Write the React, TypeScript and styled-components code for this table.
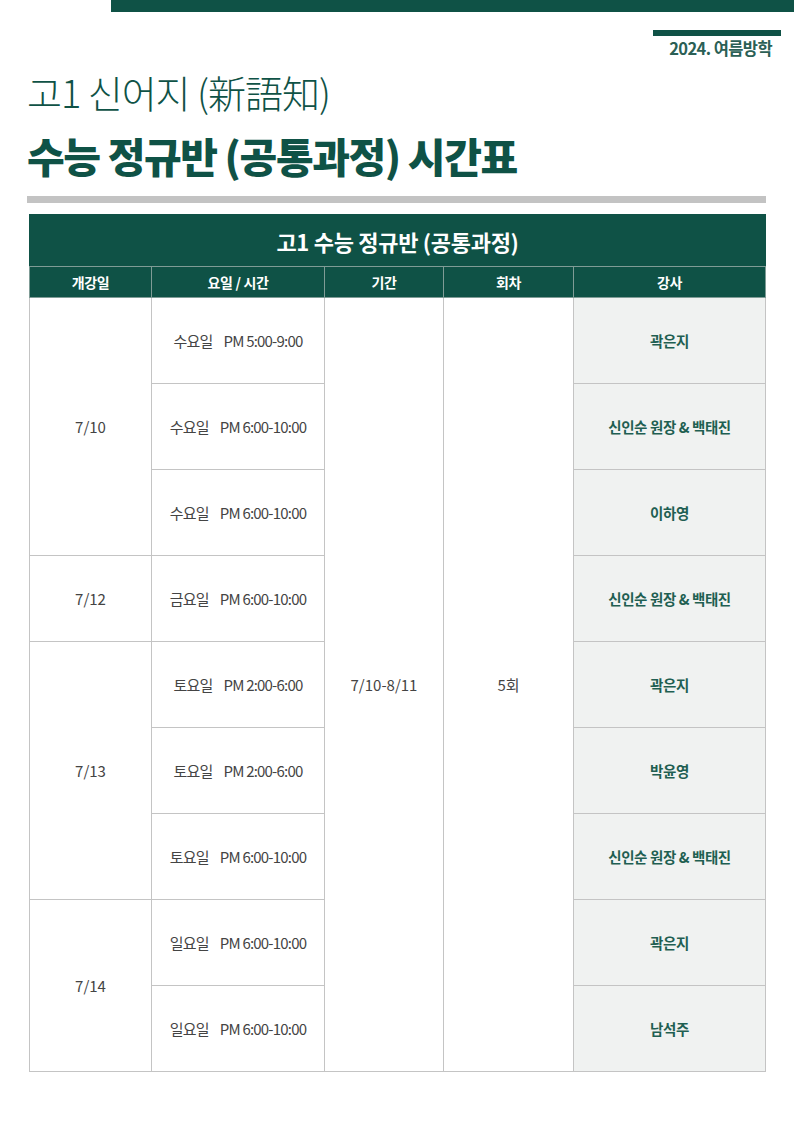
import React from "react";
import styled, { createGlobalStyle } from "styled-components";

const GREEN = "#0f5246";
const LINE = "#c4c4c4";

const GlobalStyle = createGlobalStyle`
  html, body {
    margin: 0;
    padding: 0;
    background: #ffffff;
  }
  body {
    font-family: "Noto Sans CJK KR", "Noto Sans", sans-serif;
    color: #333;
  }
`;

const Page = styled.div`
  width: 794px;
  height: 1123px;
  background: #fff;
  overflow: hidden;
`;

const TopBar = styled.div`
  margin-left: 111px;
  height: 12px;
  background: ${GREEN};
`;

const TermBox = styled.div`
  display: flex;
  flex-direction: column;
  align-items: flex-end;
  padding: 18px 13px 0 0;
`;

const TermLine = styled.div`
  width: 128px;
  height: 6px;
  background: ${GREEN};
`;

const TermText = styled.div`
  margin-top: 1px;
  margin-right: 9px;
  font-size: 16.5px;
  font-weight: 700;
  letter-spacing: -0.6px;
  color: #2b5f55;
  line-height: 22px;
`;

const TitleBlock = styled.div`
  padding: 8px 0 0 27px;
`;

const SubTitle = styled.h2`
  margin: 0;
  font-size: 38px;
  font-weight: 300;
  letter-spacing: -1px;
  color: ${GREEN};
  line-height: 50px;
`;

const MainTitle = styled.h1`
  margin: 10px 0 0;
  font-size: 41px;
  font-weight: 900;
  letter-spacing: -1.4px;
  color: ${GREEN};
  line-height: 56px;
`;

const Divider = styled.div`
  margin: 13px 28px 0 27px;
  height: 7px;
  background: #c3c3c3;
`;

const TableWrap = styled.div`
  padding: 11px 29px 0 29px;
`;

const Table = styled.table`
  width: 736px;
  border-collapse: collapse;
  table-layout: fixed;
`;

const CaptionCell = styled.th`
  height: 51px;
  padding: 0;
  background: ${GREEN};
  color: #fff;
  font-size: 22px;
  font-weight: 700;
  letter-spacing: -0.3px;
  border: 1px solid ${GREEN};
  border-bottom: 1px solid #7f9c96;
`;

const HeadCell = styled.th`
  height: 30px;
  padding: 0;
  background: ${GREEN};
  color: #fff;
  font-size: 14px;
  font-weight: 700;
  letter-spacing: -0.3px;
  border: 1px solid #7f9c96;
  border-top: none;
`;

const Cell = styled.td<{ $tone?: "date" | "time" | "teacher" }>`
  height: 85px;
  padding: 0;
  text-align: center;
  border: 1px solid ${LINE};
  background: ${(p) => (p.$tone === "teacher" ? "#f0f2f1" : "#fff")};
  color: ${(p) => (p.$tone === "teacher" ? "#1f5f52" : "#444")};
  font-size: ${(p) => (p.$tone === "teacher" ? "14.5px" : "15px")};
  font-weight: ${(p) => (p.$tone === "teacher" ? 700 : 400)};
  letter-spacing: ${(p) => (p.$tone === "time" ? "-0.8px" : p.$tone === "teacher" ? "-0.4px" : "0")};
`;

const Gap = styled.span`
  display: inline-block;
  width: 11px;
`;

type Slot = { day: string; time: string; teacher: string };
type Group = { date: string; slots: Slot[] };

const groups: Group[] = [
  {
    date: "7/10",
    slots: [
      { day: "수요일", time: "PM 5:00-9:00", teacher: "곽은지" },
      { day: "수요일", time: "PM 6:00-10:00", teacher: "신인순 원장 & 백태진" },
      { day: "수요일", time: "PM 6:00-10:00", teacher: "이하영" },
    ],
  },
  {
    date: "7/12",
    slots: [{ day: "금요일", time: "PM 6:00-10:00", teacher: "신인순 원장 & 백태진" }],
  },
  {
    date: "7/13",
    slots: [
      { day: "토요일", time: "PM 2:00-6:00", teacher: "곽은지" },
      { day: "토요일", time: "PM 2:00-6:00", teacher: "박윤영" },
      { day: "토요일", time: "PM 6:00-10:00", teacher: "신인순 원장 & 백태진" },
    ],
  },
  {
    date: "7/14",
    slots: [
      { day: "일요일", time: "PM 6:00-10:00", teacher: "곽은지" },
      { day: "일요일", time: "PM 6:00-10:00", teacher: "남석주" },
    ],
  },
];

const totalRows = groups.reduce((n, g) => n + g.slots.length, 0);

export default function App() {
  let rowIndex = 0;
  return (
    <Page>
      <GlobalStyle />
      <TopBar />
      <TermBox>
        <TermLine />
        <TermText>2024. 여름방학</TermText>
      </TermBox>
      <TitleBlock>
        <SubTitle>고1 신어지 (新語知)</SubTitle>
        <MainTitle>수능 정규반 (공통과정) 시간표</MainTitle>
      </TitleBlock>
      <Divider />
      <TableWrap>
        <Table>
          <colgroup>
            <col style={{ width: 122 }} />
            <col style={{ width: 173 }} />
            <col style={{ width: 119 }} />
            <col style={{ width: 130 }} />
            <col style={{ width: 192 }} />
          </colgroup>
          <thead>
            <tr>
              <CaptionCell colSpan={5}>고1 수능 정규반 (공통과정)</CaptionCell>
            </tr>
            <tr>
              <HeadCell>개강일</HeadCell>
              <HeadCell>요일 / 시간</HeadCell>
              <HeadCell>기간</HeadCell>
              <HeadCell>회차</HeadCell>
              <HeadCell>강사</HeadCell>
            </tr>
          </thead>
          <tbody>
            {groups.map((g) =>
              g.slots.map((s, i) => {
                const first = rowIndex === 0;
                rowIndex += 1;
                return (
                  <tr key={`${g.date}-${i}`}>
                    {i === 0 && (
                      <Cell $tone="date" rowSpan={g.slots.length}>
                        {g.date}
                      </Cell>
                    )}
                    <Cell $tone="time">
                      {s.day}
                      <Gap />
                      {s.time}
                    </Cell>
                    {first && (
                      <>
                        <Cell $tone="date" rowSpan={totalRows}>
                          7/10-8/11
                        </Cell>
                        <Cell $tone="date" rowSpan={totalRows}>
                          5회
                        </Cell>
                      </>
                    )}
                    <Cell $tone="teacher">{s.teacher}</Cell>
                  </tr>
                );
              })
            )}
          </tbody>
        </Table>
      </TableWrap>
    </Page>
  );
}
